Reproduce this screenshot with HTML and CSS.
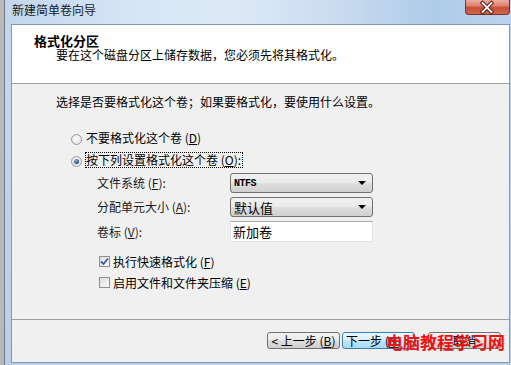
FILE: index.html
```html
<!DOCTYPE html>
<html lang="zh-CN">
<head>
    <meta charset="UTF-8">
    <meta name="viewport" content="width=device-width, initial-scale=1.0">
    <title>新建简单卷向导</title>
    <link rel="stylesheet" href="styles.css">
</head>
<body>
    <div class="window">
        <div class="titlebar">
            <span class="title">新建简单卷向导</span>
            <span class="close-btn">
                <svg width="45" height="15" viewBox="0 0 45 15">
                    <path d="M18 3 L27 12 M27 3 L18 12" stroke="#5a1c14" stroke-width="4" stroke-linecap="square" fill="none"/>
                    <path d="M18 3 L27 12 M27 3 L18 12" stroke="#ffffff" stroke-width="2" stroke-linecap="square" fill="none"/>
                </svg>
            </span>
        </div>
        <div class="client">
            <div class="header">
                <h2>格式化分区</h2>
                <p>要在这个磁盘分区上储存数据，您必须先将其格式化。</p>
            </div>
            <div class="content">
                <p class="intro">选择是否要格式化这个卷；如果要格式化，要使用什么设置。</p>
                <div class="option">
                    <span class="radio"></span>
                    <span class="opt-text">不要格式化这个卷 (<u>D</u>)</span>
                </div>
                <div class="option second">
                    <span class="radio checked"></span>
                    <span class="opt-text focus">按下列设置格式化这个卷 (<u>O</u>):</span>
                </div>
                <div class="fields">
                    <label>文件系统 (<u>F</u>):</label>
                    <div class="combo"><span class="mono">NTFS</span><span class="arrow"></span></div>
                    <label>分配单元大小 (<u>A</u>):</label>
                    <div class="combo"><span>默认值</span><span class="arrow"></span></div>
                    <label>卷标 (<u>V</u>):</label>
                    <div class="textbox">新加卷</div>
                </div>
                <div class="check first">
                    <span class="box checked">
                        <svg width="9" height="9" viewBox="0 0 9 9">
                            <path d="M1 4.5 L3.5 7 L8 1.5" stroke="#3d5a96" stroke-width="1.8" fill="none"/>
                        </svg>
                    </span>
                    <span>执行快速格式化 (<u>F</u>)</span>
                </div>
                <div class="check">
                    <span class="box"></span>
                    <span>启用文件和文件夹压缩 (<u>E</u>)</span>
                </div>
            </div>
            <div class="footer">
                <button class="btn">&lt; 上一步 (<u>B</u>)</button>
                <button class="btn default">下一步 (<u>N</u>) &gt;</button>
                <button class="btn cancel">取消</button>
                <span class="watermark">电脑教程学习网</span>
            </div>
        </div>
    </div>
</body>
</html>
```

FILE: styles.css
```css
body {
    margin: 0;
    width: 511px;
    height: 365px;
    overflow: hidden;
    display: flex;
    background: linear-gradient(90deg, #b9b9b9, #a8a8a8);
    font-family: "Noto Sans CJK SC", sans-serif;
    font-size: 12px;
    color: #000;
}
.window {
    flex: 1;
    margin-left: 4px;
    border-left: 1px solid #6f7a86;
    display: flex;
    flex-direction: column;
    padding: 0 1px 2px 6px;
    background: linear-gradient(180deg, #c4d8ee, #bed3eb 60%, #b9cfe8);
}
.titlebar {
    height: 24px;
    display: flex;
    align-items: flex-start;
    margin: 0 -1px 0 -6px;
    padding: 0 1px 0 6px;
    background: linear-gradient(90deg, #c1d6ed 0%, #d6e5f5 25%, #dde9f6 45%, #cbdcf0 65%, #aecbe9 85%, #bcd3ec 100%);
}
.title {
    padding: 3px 0 0 1px;
    line-height: 14px;
    color: #1a1a1a;
}
.close-btn {
    margin-left: auto;
    width: 45px;
    height: 15px;
    box-sizing: border-box;
    border: 1px solid #7a3127;
    border-top: none;
    border-radius: 0 0 4px 4px;
    background: linear-gradient(180deg, #e9ada0 0%, #dc8371 40%, #c84c38 55%, #cf6a50 100%);
    display: flex;
    justify-content: center;
}
.close-btn svg {
    margin-left: -1px;
}
.client {
    flex: 1;
    display: flex;
    flex-direction: column;
    border: 1px solid #8199b6;
    background-color: #f0f0f0;
}
.header {
    box-sizing: border-box;
    height: 59px;
    padding: 9px 0 0 22px;
    background-color: #fff;
    border-bottom: 1px solid #a0a0a0;
}
.header h2 {
    margin: 0;
    font-size: 13px;
    line-height: 14px;
    font-weight: bold;
}
.header p {
    margin: 0 0 0 22px;
    line-height: 14px;
}
.content {
    flex: 1;
    padding: 10px 0 0 44px;
}
.intro {
    margin: 0;
    line-height: 16px;
}
.option {
    display: flex;
    align-items: center;
    height: 16px;
    margin: 20px 0 0 15px;
}
.option.second {
    margin-top: 6px;
}
.radio {
    width: 11px;
    height: 11px;
    box-sizing: border-box;
    border-radius: 50%;
    border: 1px solid #9a9a9a;
    background: radial-gradient(circle at 50% 40%, #fdfdfd, #dcdcdc);
    margin: 2px 4px 0 0;
    display: flex;
    align-items: center;
    justify-content: center;
}
.radio.checked::after {
    content: "";
    width: 5px;
    height: 5px;
    border-radius: 50%;
    background: radial-gradient(circle at 40% 35%, #8fb1e0, #24468a 70%);
}
.opt-text {
    line-height: 14px;
    border: 1px solid transparent;
    padding: 0 1px 0 0;
    margin-left: -1px;
}
.opt-text.focus {
    border: 1px dotted #000;
}
.fields {
    display: grid;
    grid-template-columns: 133px 143px;
    grid-template-rows: 20px 20px 21px;
    row-gap: 4px;
    margin: 5px 0 0 41px;
}
.fields label {
    display: flex;
    align-items: center;
    line-height: 14px;
    color: #1a1a1a;
}
.combo {
    display: flex;
    align-items: center;
    box-sizing: border-box;
    border: 1px solid #707070;
    border-radius: 3px;
    padding-left: 3px;
    background: linear-gradient(180deg, #f2f2f2 0%, #ebebeb 45%, #dddddd 55%, #d0d0d0 100%);
    font-size: 13px;
}
.combo .mono {
    font-family: "Liberation Mono", monospace;
    font-weight: bold;
    font-size: 10px;
    letter-spacing: -0.5px;
}
.arrow {
    margin-left: auto;
    margin-right: 6px;
    width: 0;
    height: 0;
    border-left: 4px solid transparent;
    border-right: 4px solid transparent;
    border-top: 4px solid #000;
}
.textbox {
    box-sizing: border-box;
    border: 1px solid #e2e3ea;
    border-top-color: #abadb3;
    background-color: #fff;
    padding-left: 2px;
    display: flex;
    align-items: center;
    font-size: 13px;
}
.check {
    display: flex;
    align-items: center;
    height: 16px;
    margin: 5px 0 0 43px;
}
.check.first {
    margin-top: 11px;
}
.box {
    width: 11px;
    height: 11px;
    box-sizing: border-box;
    border: 1px solid #8e8f8f;
    background: linear-gradient(135deg, #dcdcdc, #fbfbfb);
    margin-right: 3px;
    display: flex;
    align-items: center;
    justify-content: center;
}
.footer {
    position: relative;
    box-sizing: border-box;
    height: 43px;
    border-top: 1px solid #a0a0a0;
    display: flex;
    align-items: flex-start;
    justify-content: flex-end;
    padding: 12px 8px 0 0;
}
.btn {
    width: 73px;
    height: 17px;
    padding: 0;
    font-family: inherit;
    font-size: 12px;
    line-height: 14px;
    color: #000;
    border: 1px solid #707070;
    border-radius: 3px;
    background: linear-gradient(180deg, #f2f2f2 0%, #ebebeb 45%, #dddddd 55%, #cfcfcf 100%);
    margin-left: 2px;
}
.btn.default {
    border-color: #3c7fb1;
    background: linear-gradient(180deg, #eaf6fd 0%, #d9f0fc 45%, #bee6fd 55%, #a7d9f5 100%);
}
.btn.cancel {
    margin-left: 13px;
}
.watermark {
    position: absolute;
    right: 4px;
    top: 13px;
    font-size: 17px;
    line-height: 17px;
    font-weight: bold;
    color: #ee1111;
}
```
